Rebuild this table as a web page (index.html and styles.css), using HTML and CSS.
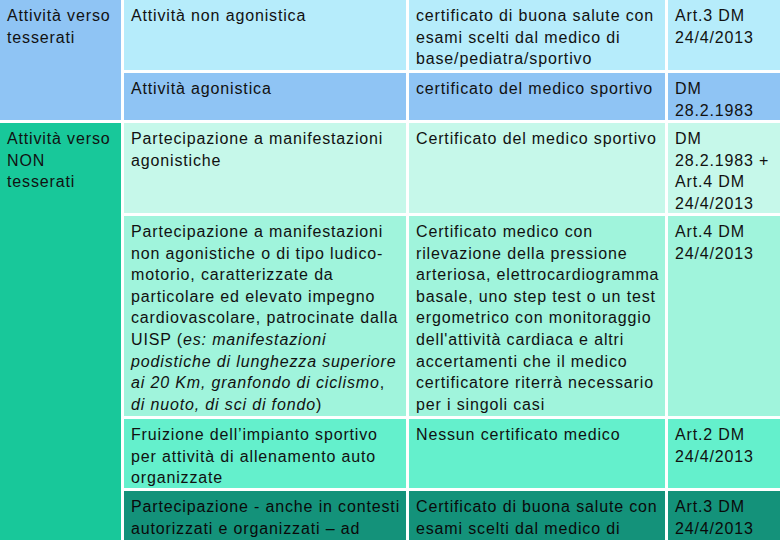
FILE: index.html
```html
<!DOCTYPE html>
<html lang="it">
<head>
<meta charset="utf-8">
<link rel="stylesheet" href="styles.css">
</head>
<body>
<div class="grid">
  <div class="cell c-tess span-a">Attività verso tesserati</div>
  <div class="cell r1">Attività non agonistica</div>
  <div class="cell r1">certificato di buona salute con esami scelti dal medico di base/pediatra/sportivo</div>
  <div class="cell r1">Art.3 DM 24/4/2013</div>

  <div class="cell r2">Attività agonistica</div>
  <div class="cell r2">certificato del medico sportivo</div>
  <div class="cell r2">DM<br>28.2.1983</div>

  <div class="cell c-non span-b">Attività verso NON tesserati</div>
  <div class="cell r3">Partecipazione a manifestazioni agonistiche</div>
  <div class="cell r3">Certificato del medico sportivo</div>
  <div class="cell r3">DM<br>28.2.1983 +<br>Art.4 DM<br>24/4/2013</div>

  <div class="cell r4">Partecipazione a manifestazioni non agonistiche o di tipo ludico-motorio, caratterizzate da particolare ed elevato impegno cardiovascolare, patrocinate dalla UISP (<i>es: manifestazioni podistiche di lunghezza superiore ai 20 Km, granfondo di ciclismo</i>, <i>di nuoto, di sci di fondo</i>)</div>
  <div class="cell r4">Certificato medico con rilevazione della pressione arteriosa, elettrocardiogramma basale, uno step test o un test ergometrico con monitoraggio dell'attività cardiaca e altri accertamenti che il medico certificatore riterrà necessario per i singoli casi</div>
  <div class="cell r4">Art.4 DM 24/4/2013</div>

  <div class="cell r5">Fruizione dell’impianto sportivo per attività di allenamento auto organizzate</div>
  <div class="cell r5">Nessun certificato medico</div>
  <div class="cell r5">Art.2 DM 24/4/2013</div>

  <div class="cell r6">Partecipazione - anche in contesti autorizzati e organizzati – ad</div>
  <div class="cell r6">Certificato di buona salute con esami scelti dal medico di</div>
  <div class="cell r6">Art.3 DM 24/4/2013</div>
</div>
</body>
</html>
```

FILE: styles.css
```css
html, body {
  margin: 0;
  padding: 0;
  background: #ffffff;
  overflow: hidden;
}
.grid {
  width: 780px;
  height: 540px;
  display: grid;
  grid-template-columns: 121px 282px 256px 112px;
  grid-template-rows: 70px 47px 90px 200px 69px 60px;
  gap: 3px;
  background: #ffffff;
  font-family: "Liberation Sans", Arial, sans-serif;
  font-size: 16px;
  line-height: 21.6px;
  letter-spacing: 0.85px;
  color: #111111;
}
.cell {
  padding: 5px 4px 0 7px;
  overflow: hidden;
}
.span-a { grid-row: 1 / 3; }
.span-b { grid-row: 3 / 7; }
.c-tess { background: #8fc4f4; }
.c-non { background: #18c89a; }
.r1 { background: #b6ecfb; }
.r2 { background: #8fc4f4; }
.r3 { background: #c6f8ea; }
.r4 { background: #a0f4dc; }
.r5 { background: #64f0cc; }
.r6 { background: #14927a; color: #0a0a0a; }
```
